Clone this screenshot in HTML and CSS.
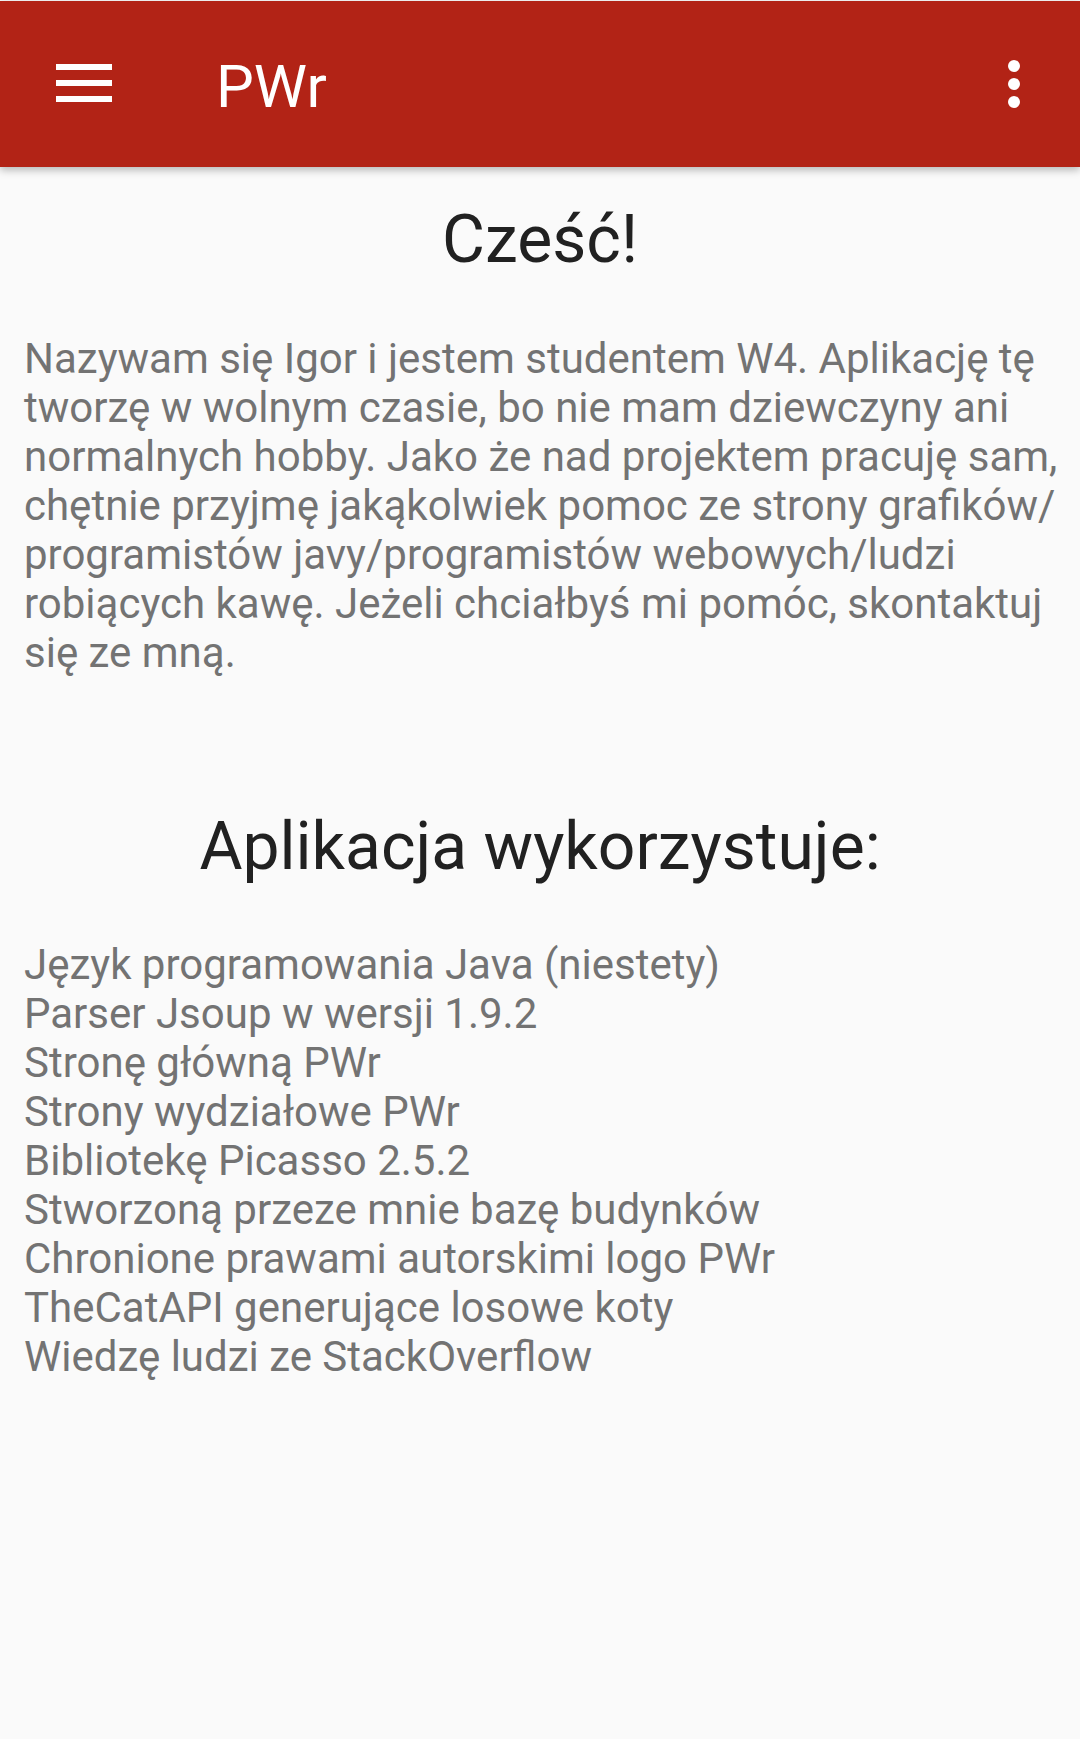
FILE: index.html
```html
<!DOCTYPE html>
<html lang="pl">
<head>
<meta charset="utf-8">
<title>PWr</title>
<link rel="stylesheet" href="styles.css">
</head>
<body>
<header class="toolbar">
  <svg class="menu-icon" width="56" height="38" viewBox="0 0 56 38" aria-hidden="true">
    <rect x="0" y="0" width="56" height="6" fill="#fff"/>
    <rect x="0" y="16" width="56" height="6" fill="#fff"/>
    <rect x="0" y="32" width="56" height="6" fill="#fff"/>
  </svg>
  <div class="title">PWr</div>
  <svg class="more-icon" width="12" height="48" viewBox="0 0 12 48" aria-hidden="true">
    <circle cx="6" cy="6" r="6" fill="#fff"/>
    <circle cx="6" cy="24" r="6" fill="#fff"/>
    <circle cx="6" cy="42" r="6" fill="#fff"/>
  </svg>
</header>
<main class="content">
  <h1 class="heading heading-hello">Cześć!</h1>
  <p class="body-text">Nazywam się Igor i jestem studentem W4. Aplikację tę tworzę w wolnym czasie, bo nie mam dziewczyny ani normalnych hobby. Jako że nad projektem pracuję sam, chętnie przyjmę jakąkolwiek pomoc ze strony grafików/<wbr>programistów javy/<wbr>programistów webowych/<wbr>ludzi robiących kawę. Jeżeli chciałbyś mi pomóc, skontaktuj się ze mną.</p>
  <h2 class="heading heading-uses">Aplikacja wykorzystuje:</h2>
  <ul class="uses-list">
    <li>Język programowania Java (niestety)</li>
    <li>Parser Jsoup w wersji 1.9.2</li>
    <li>Stronę główną PWr</li>
    <li>Strony wydziałowe PWr</li>
    <li>Bibliotekę Picasso 2.5.2</li>
    <li>Stworzoną przeze mnie bazę budynków</li>
    <li>Chronione prawami autorskimi logo PWr</li>
    <li>TheCatAPI generujące losowe koty</li>
    <li>Wiedzę ludzi ze StackOverflow</li>
  </ul>
</main>
</body>
</html>
```
FILE: styles.css
```css
html, body {
  margin: 0;
  padding: 0;
}
body {
  background: #fafafa;
  font-family: Roboto, "Noto Sans", "Liberation Sans", sans-serif;
  width: 1080px;
  min-height: 1739px;
  padding-top: 1px;
  box-sizing: border-box;
}
.toolbar {
  position: relative;
  z-index: 1;
  height: 166px;
  background: #b22316;
  display: flex;
  align-items: center;
  padding: 0 60px 0 56px;
  box-shadow: 0 3px 8px rgba(0, 0, 0, 0.28);
}
.menu-icon {
  flex: none;
  display: block;
  margin-top: -2px;
}
.title {
  color: #fff;
  font-size: 60px;
  line-height: 70px;
  margin-left: 104px;
  margin-top: 5px;
  flex: 1;
}
.more-icon {
  flex: none;
  display: block;
}
.content {
  padding: 0 24px;
}
.heading {
  margin: 0;
  color: #212121;
  font-weight: 400;
  text-align: center;
  line-height: normal;
  font-size: 66px;
}
.heading-hello {
  margin-top: 34px;
}
.heading-uses {
  margin-top: 131px;
}
.body-text {
  margin: 56px -12px 0 0;
  color: #737373;
  font-size: 42px;
  line-height: 49px;
}
.uses-list {
  list-style: none;
  margin: 55px 0 0;
  padding: 0;
  color: #737373;
  font-size: 42px;
  line-height: 49px;
}
```
